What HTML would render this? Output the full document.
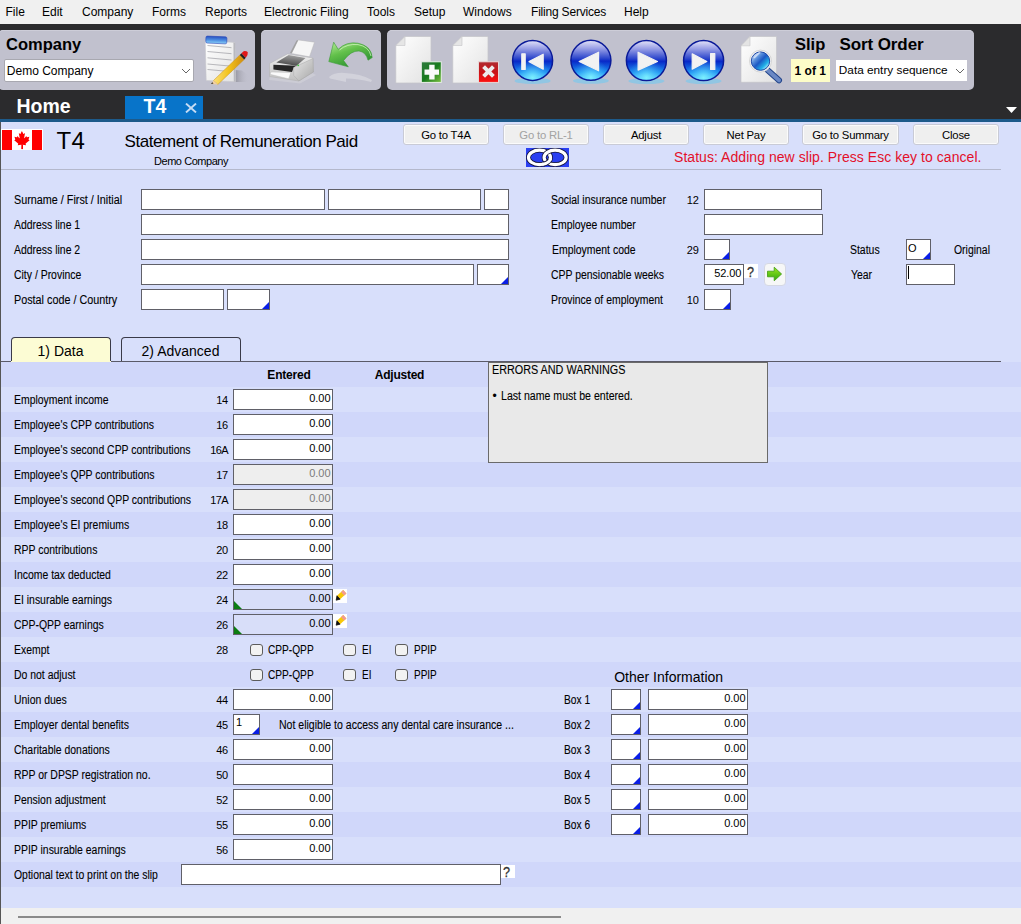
<!DOCTYPE html><html><head><meta charset="utf-8"><style>
html,body{margin:0;padding:0}
body{width:1021px;height:924px;overflow:hidden;position:relative;font-family:"Liberation Sans",sans-serif;background:#d8dffb}
.t{position:absolute;white-space:nowrap}
</style></head><body>
<div style="position:absolute;left:0px;top:0px;width:1021px;height:24px;background:#f0f0f0"></div>
<div class="t" style="left:5.5px;top:5.84px;font-size:12px;line-height:12px;font-weight:400;color:#000;">File</div>
<div class="t" style="left:42px;top:5.84px;font-size:12px;line-height:12px;font-weight:400;color:#000;">Edit</div>
<div class="t" style="left:82px;top:5.84px;font-size:12px;line-height:12px;font-weight:400;color:#000;">Company</div>
<div class="t" style="left:152px;top:5.84px;font-size:12px;line-height:12px;font-weight:400;color:#000;">Forms</div>
<div class="t" style="left:205px;top:5.84px;font-size:12px;line-height:12px;font-weight:400;color:#000;">Reports</div>
<div class="t" style="left:264px;top:5.84px;font-size:12px;line-height:12px;font-weight:400;color:#000;">Electronic Filing</div>
<div class="t" style="left:367px;top:5.84px;font-size:12px;line-height:12px;font-weight:400;color:#000;">Tools</div>
<div class="t" style="left:414px;top:5.84px;font-size:12px;line-height:12px;font-weight:400;color:#000;">Setup</div>
<div class="t" style="left:463px;top:5.84px;font-size:12px;line-height:12px;font-weight:400;color:#000;">Windows</div>
<div class="t" style="left:531px;top:5.84px;font-size:12px;line-height:12px;font-weight:400;color:#000;letter-spacing:-0.2px;">Filing Services</div>
<div class="t" style="left:624px;top:5.84px;font-size:12px;line-height:12px;font-weight:400;color:#000;">Help</div>
<div style="position:absolute;left:0px;top:24px;width:1021px;height:95px;background:#2b2b2d"></div>
<div style="position:absolute;left:-2px;top:30px;width:257px;height:60px;background:#c1c1ce;border-radius:5px;box-shadow:inset 0 1px 0 #cdcdd8"></div>
<div style="position:absolute;left:261px;top:30px;width:120px;height:60px;background:#c1c1ce;border-radius:5px;box-shadow:inset 0 1px 0 #cdcdd8"></div>
<div style="position:absolute;left:387px;top:30px;width:587px;height:60px;background:#c1c1ce;border-radius:5px;box-shadow:inset 0 1px 0 #cdcdd8"></div>
<div class="t" style="left:6px;top:36.33px;font-size:16.5px;line-height:16.5px;font-weight:700;color:#000;">Company</div>
<div style="position:absolute;left:4px;top:59px;width:190px;height:23px;background:#fff;border:1px solid #a8a8b0;box-sizing:border-box;border-radius:2px"></div>
<div class="t" style="left:6.8px;top:65.04px;font-size:12px;line-height:12px;font-weight:400;color:#000;">Demo Company</div>
<svg style="position:absolute;left:180.5px;top:68px" width="10" height="7"><path d="M1 1 L5 5 L9 1" fill="none" stroke="#555" stroke-width="0.9"/></svg>
<div class="t" style="left:795px;top:36.43px;font-size:16.5px;line-height:16.5px;font-weight:700;color:#000;">Slip</div>
<div class="t" style="left:839.5px;top:36.01px;font-size:17px;line-height:17px;font-weight:700;color:#000;letter-spacing:-0.1px;">Sort Order</div>
<div style="position:absolute;left:791px;top:59px;width:39px;height:23px;background:#fdfdc8"></div>
<div class="t" style="left:794.6px;top:65.04px;font-size:12px;line-height:12px;font-weight:700;color:#000;">1 of 1</div>
<div style="position:absolute;left:836px;top:60px;width:131px;height:21px;background:#fff"></div>
<div class="t" style="left:838.8px;top:65.21px;font-size:11.8px;line-height:11.8px;font-weight:400;color:#000;">Data entry sequence</div>
<svg style="position:absolute;left:954.5px;top:68px" width="10" height="7"><path d="M1 1 L5 5 L9 1" fill="none" stroke="#555" stroke-width="0.9"/></svg>
<div class="t" style="left:16.5px;top:97.49px;font-size:19.5px;line-height:19.5px;font-weight:700;color:#fff;">Home</div>
<div style="position:absolute;left:125px;top:96px;width:78px;height:23px;background:#0874c9"></div>
<div class="t" style="left:143.5px;top:97.49px;font-size:19.5px;line-height:19.5px;font-weight:700;color:#fff;">T4</div>
<svg style="position:absolute;left:184.5px;top:102.5px" width="12" height="10"><path d="M1 0.6 L11 9.4 M11 0.6 L1 9.4" stroke="#c6dcf4" stroke-width="2"/></svg>
<svg style="position:absolute;left:1006px;top:107px" width="12" height="7"><path d="M0 0 L11 0 L5.5 6 Z" fill="#fff"/></svg>
<div style="position:absolute;left:0px;top:119px;width:1021px;height:3px;background:#1d5a8a"></div>
<div style="position:absolute;left:0px;top:122px;width:1021px;height:786px;background:#d8dffb"></div>
<div style="position:absolute;left:0px;top:122px;width:1px;height:786px;background:#555"></div>
<svg style="position:absolute;left:1px;top:129px" width="42" height="21" viewBox="0 0 42 21"><rect width="42" height="21" fill="#fff"/><rect x="1" y="1" width="10" height="20" fill="#f00"/><rect x="31" y="1" width="10" height="20" fill="#f00"/><path transform="translate(1.03 0.1) scale(0.00414 0.00449)" d="m4890 4430-45-863a95 95 0 0 1 111-98l859 151-116-320a65 65 0 0 1 20-73l941-762-212-99a65 65 0 0 1-34-79l186-572-542 115a65 65 0 0 1-73-38l-105-247-423 454a65 65 0 0 1-111-57l204-1052-327 189a65 65 0 0 1-91-27l-332-652-332 652a65 65 0 0 1-91 27l-327-189 204 1052a65 65 0 0 1-111 57l-423-454-105 247a65 65 0 0 1-73 38l-542-115 186 572a65 65 0 0 1-34 79l-212 99 941 762a65 65 0 0 1 20 73l-116 320 859-151a95 95 0 0 1 111 98l-45 863z" fill="#f00"/><rect x="20.5" y="15.5" width="1.5" height="4.6" fill="#f00"/></svg>
<div class="t" style="left:56.5px;top:128.68px;font-size:24px;line-height:24px;font-weight:400;color:#000;letter-spacing:0.3px;">T4</div>
<div class="t" style="left:124.5px;top:133.21px;font-size:17px;line-height:17px;font-weight:400;color:#000;letter-spacing:-0.45px;">Statement of Remuneration Paid</div>
<div class="t" style="left:154px;top:155.69px;font-size:11px;line-height:11px;font-weight:400;color:#000;letter-spacing:-0.45px;">Demo Company</div>
<div style="position:absolute;left:403px;top:124px;width:86px;height:21px;box-sizing:border-box;border:1px solid #c9cbd6;border-radius:3px;background:#efefef;box-shadow:inset 0 0 0 1px #fbfbfb"></div>
<div class="t" style="left:446.0px;top:129.93px;font-size:11.3px;line-height:11.3px;font-weight:400;color:#000;letter-spacing:-0.2px;transform:scaleX(1) translateX(-50%);transform-origin:0 0;">Go to T4A</div>
<div style="position:absolute;left:503px;top:124px;width:86px;height:21px;box-sizing:border-box;border:1px solid #c9cbd6;border-radius:3px;background:#efefef;box-shadow:inset 0 0 0 1px #fbfbfb"></div>
<div class="t" style="left:546.0px;top:129.93px;font-size:11.3px;line-height:11.3px;font-weight:400;color:#a2a2a2;letter-spacing:-0.2px;transform:scaleX(1) translateX(-50%);transform-origin:0 0;">Go to RL-1</div>
<div style="position:absolute;left:603px;top:124px;width:86px;height:21px;box-sizing:border-box;border:1px solid #c9cbd6;border-radius:3px;background:#efefef;box-shadow:inset 0 0 0 1px #fbfbfb"></div>
<div class="t" style="left:646.0px;top:129.93px;font-size:11.3px;line-height:11.3px;font-weight:400;color:#000;letter-spacing:-0.2px;transform:scaleX(1) translateX(-50%);transform-origin:0 0;">Adjust</div>
<div style="position:absolute;left:703px;top:124px;width:86px;height:21px;box-sizing:border-box;border:1px solid #c9cbd6;border-radius:3px;background:#efefef;box-shadow:inset 0 0 0 1px #fbfbfb"></div>
<div class="t" style="left:746.0px;top:129.93px;font-size:11.3px;line-height:11.3px;font-weight:400;color:#000;letter-spacing:-0.2px;transform:scaleX(1) translateX(-50%);transform-origin:0 0;">Net Pay</div>
<div style="position:absolute;left:802px;top:124px;width:97px;height:21px;box-sizing:border-box;border:1px solid #c9cbd6;border-radius:3px;background:#efefef;box-shadow:inset 0 0 0 1px #fbfbfb"></div>
<div class="t" style="left:850.5px;top:129.93px;font-size:11.3px;line-height:11.3px;font-weight:400;color:#000;letter-spacing:-0.2px;transform:scaleX(1) translateX(-50%);transform-origin:0 0;">Go to Summary</div>
<div style="position:absolute;left:913px;top:124px;width:86px;height:21px;box-sizing:border-box;border:1px solid #c9cbd6;border-radius:3px;background:#efefef;box-shadow:inset 0 0 0 1px #fbfbfb"></div>
<div class="t" style="left:956.0px;top:129.93px;font-size:11.3px;line-height:11.3px;font-weight:400;color:#000;letter-spacing:-0.2px;transform:scaleX(1) translateX(-50%);transform-origin:0 0;">Close</div>
<svg style="position:absolute;left:526px;top:148px" width="43" height="19" viewBox="0 0 43 19"><rect width="43" height="19" fill="#2b40f2"/><ellipse cx="13.5" cy="9.4" rx="11" ry="7.2" fill="none" stroke="#14143a" stroke-width="4.8"/><ellipse cx="13.5" cy="9.4" rx="11" ry="7.2" fill="none" stroke="#fff" stroke-width="3.2"/><ellipse cx="29.1" cy="9.4" rx="11" ry="7.2" fill="none" stroke="#14143a" stroke-width="4.8"/><ellipse cx="29.1" cy="9.4" rx="11" ry="7.2" fill="none" stroke="#fff" stroke-width="3.2"/><path d="M23.84 11.86 A11 7.2 0 0 1 17.26 16.17" fill="none" stroke="#14143a" stroke-width="4.8"/><path d="M24.6 10.5 A11 7.2 0 0 1 16.2 16.45" fill="none" stroke="#fff" stroke-width="3.2"/></svg>
<div class="t" style="left:674px;top:150.15px;font-size:14px;line-height:14px;font-weight:400;color:#e3102a;letter-spacing:0.05px;">Status: Adding new slip. Press Esc key to cancel.</div>
<div style="position:absolute;left:1px;top:169px;width:1000px;height:1px;background:#b4b8cc"></div>
<div class="t" style="left:14.3px;top:193.84px;font-size:12px;line-height:12px;font-weight:400;color:#000;transform:scaleX(0.9);transform-origin:0 0;-webkit-text-stroke:0.1px #000;">Surname / First / Initial</div>
<div class="t" style="left:14.3px;top:218.84px;font-size:12px;line-height:12px;font-weight:400;color:#000;transform:scaleX(0.87);transform-origin:0 0;-webkit-text-stroke:0.1px #000;">Address line 1</div>
<div class="t" style="left:14.3px;top:243.84px;font-size:12px;line-height:12px;font-weight:400;color:#000;transform:scaleX(0.87);transform-origin:0 0;-webkit-text-stroke:0.1px #000;">Address line 2</div>
<div class="t" style="left:13.5px;top:268.84px;font-size:12px;line-height:12px;font-weight:400;color:#000;transform:scaleX(0.87);transform-origin:0 0;-webkit-text-stroke:0.1px #000;">City / Province</div>
<div class="t" style="left:14.3px;top:293.84px;font-size:12px;line-height:12px;font-weight:400;color:#000;transform:scaleX(0.9);transform-origin:0 0;-webkit-text-stroke:0.1px #000;">Postal code / Country</div>
<div style="position:absolute;left:141px;top:189px;width:184px;height:21px;box-sizing:border-box;border:1px solid #606068;background:#fff"></div>
<div style="position:absolute;left:328px;top:189px;width:153px;height:21px;box-sizing:border-box;border:1px solid #606068;background:#fff"></div>
<div style="position:absolute;left:484px;top:189px;width:25px;height:21px;box-sizing:border-box;border:1px solid #606068;background:#fff"></div>
<div style="position:absolute;left:141px;top:214px;width:368px;height:21px;box-sizing:border-box;border:1px solid #606068;background:#fff"></div>
<div style="position:absolute;left:141px;top:239px;width:368px;height:21px;box-sizing:border-box;border:1px solid #606068;background:#fff"></div>
<div style="position:absolute;left:141px;top:264px;width:333px;height:21px;box-sizing:border-box;border:1px solid #606068;background:#fff"></div>
<div style="position:absolute;left:477px;top:264px;width:32px;height:21px;box-sizing:border-box;border:1px solid #606068;background:#fff"></div>
<svg style="position:absolute;left:501px;top:277px" width="7" height="7"><path d="M7 0 L7 7 L0 7 Z" fill="#0a1ee6"/></svg>
<div style="position:absolute;left:141px;top:289px;width:83px;height:21px;box-sizing:border-box;border:1px solid #606068;background:#fff"></div>
<div style="position:absolute;left:227px;top:289px;width:43px;height:21px;box-sizing:border-box;border:1px solid #606068;background:#fff"></div>
<svg style="position:absolute;left:262px;top:302px" width="7" height="7"><path d="M7 0 L7 7 L0 7 Z" fill="#0a1ee6"/></svg>
<div class="t" style="left:551px;top:193.84px;font-size:12px;line-height:12px;font-weight:400;color:#000;transform:scaleX(0.87);transform-origin:0 0;-webkit-text-stroke:0.1px #000;">Social insurance number</div>
<div class="t" style="right:322.5px;top:194.69px;font-size:11px;line-height:11px;font-weight:400;color:#000;letter-spacing:-0.3px;">12</div>
<div class="t" style="left:551px;top:218.84px;font-size:12px;line-height:12px;font-weight:400;color:#000;transform:scaleX(0.87);transform-origin:0 0;-webkit-text-stroke:0.1px #000;">Employee number</div>
<div class="t" style="left:552px;top:243.84px;font-size:12px;line-height:12px;font-weight:400;color:#000;transform:scaleX(0.87);transform-origin:0 0;-webkit-text-stroke:0.1px #000;">Employment code</div>
<div class="t" style="right:322.5px;top:244.69px;font-size:11px;line-height:11px;font-weight:400;color:#000;letter-spacing:-0.3px;">29</div>
<div class="t" style="left:551px;top:268.84px;font-size:12px;line-height:12px;font-weight:400;color:#000;transform:scaleX(0.87);transform-origin:0 0;-webkit-text-stroke:0.1px #000;">CPP pensionable weeks</div>
<div class="t" style="left:551px;top:293.84px;font-size:12px;line-height:12px;font-weight:400;color:#000;transform:scaleX(0.87);transform-origin:0 0;-webkit-text-stroke:0.1px #000;">Province of employment</div>
<div class="t" style="right:322.5px;top:294.69px;font-size:11px;line-height:11px;font-weight:400;color:#000;letter-spacing:-0.3px;">10</div>
<div style="position:absolute;left:704px;top:189px;width:118px;height:21px;box-sizing:border-box;border:1px solid #606068;background:#fff"></div>
<div style="position:absolute;left:704px;top:214px;width:119px;height:21px;box-sizing:border-box;border:1px solid #606068;background:#fff"></div>
<div style="position:absolute;left:704px;top:239px;width:26px;height:21px;box-sizing:border-box;border:1px solid #606068;background:#fff"></div>
<svg style="position:absolute;left:722px;top:252px" width="7" height="7"><path d="M7 0 L7 7 L0 7 Z" fill="#0a1ee6"/></svg>
<div style="position:absolute;left:704px;top:264px;width:40px;height:21px;box-sizing:border-box;border:1px solid #606068;background:#fff"></div>
<div class="t" style="right:279.70000000000005px;top:268.19px;font-size:11px;line-height:11px;font-weight:400;color:#000;letter-spacing:-0.1px;">52.00</div>
<div style="position:absolute;left:744px;top:264px;width:14px;height:14px;background:#fff"></div>
<div class="t" style="left:747px;top:264.95px;font-size:14px;line-height:14px;font-weight:400;color:#333;transform:scaleX(0.9);transform-origin:0 0;-webkit-text-stroke:0.3px #333;">?</div>
<div style="position:absolute;left:763.5px;top:263px;width:22px;height:23px;box-sizing:border-box;border:1px solid #d5d8e4;border-radius:4px;background:#f6f7f7"></div>
<svg style="position:absolute;left:766px;top:266px" width="17" height="16" viewBox="0 0 17 16"><defs><linearGradient id="ga" x1="0" y1="0" x2="0" y2="1"><stop offset="0" stop-color="#9be81e"/><stop offset="1" stop-color="#2fa80e"/></linearGradient></defs><path d="M1.5 5.2 L8.2 5.2 L8.2 1.2 L15.6 8 L8.2 14.8 L8.2 10.8 L1.5 10.8 Z" fill="url(#ga)" stroke="#3d9a10" stroke-width="0.8"/></svg>
<div style="position:absolute;left:704px;top:289px;width:27px;height:21px;box-sizing:border-box;border:1px solid #606068;background:#fff"></div>
<svg style="position:absolute;left:723px;top:302px" width="7" height="7"><path d="M7 0 L7 7 L0 7 Z" fill="#0a1ee6"/></svg>
<div class="t" style="left:850.2px;top:243.84px;font-size:12px;line-height:12px;font-weight:400;color:#000;transform:scaleX(0.87);transform-origin:0 0;-webkit-text-stroke:0.1px #000;">Status</div>
<div class="t" style="left:851px;top:268.84px;font-size:12px;line-height:12px;font-weight:400;color:#000;transform:scaleX(0.87);transform-origin:0 0;-webkit-text-stroke:0.1px #000;">Year</div>
<div class="t" style="left:953.6px;top:243.84px;font-size:12px;line-height:12px;font-weight:400;color:#000;transform:scaleX(0.87);transform-origin:0 0;-webkit-text-stroke:0.1px #000;">Original</div>
<div style="position:absolute;left:906px;top:239px;width:25px;height:21px;box-sizing:border-box;border:1px solid #606068;background:#fff"></div>
<svg style="position:absolute;left:923px;top:252px" width="7" height="7"><path d="M7 0 L7 7 L0 7 Z" fill="#0a1ee6"/></svg>
<div class="t" style="left:908px;top:242.69px;font-size:11px;line-height:11px;font-weight:400;color:#000;">O</div>
<div style="position:absolute;left:906px;top:264px;width:49px;height:21px;box-sizing:border-box;border:1px solid #606068;background:#fff"></div>
<div style="position:absolute;left:908px;top:266px;width:1px;height:13px;background:#000"></div>
<div style="position:absolute;left:1px;top:362px;width:1020px;height:25px;background:#d0d7fa"></div>
<div style="position:absolute;left:1px;top:387px;width:1020px;height:25px;background:#d8dffb"></div>
<div style="position:absolute;left:1px;top:412px;width:1020px;height:25px;background:#d0d7fa"></div>
<div style="position:absolute;left:1px;top:437px;width:1020px;height:25px;background:#d8dffb"></div>
<div style="position:absolute;left:1px;top:462px;width:1020px;height:25px;background:#d0d7fa"></div>
<div style="position:absolute;left:1px;top:487px;width:1020px;height:25px;background:#d8dffb"></div>
<div style="position:absolute;left:1px;top:512px;width:1020px;height:25px;background:#d0d7fa"></div>
<div style="position:absolute;left:1px;top:537px;width:1020px;height:25px;background:#d8dffb"></div>
<div style="position:absolute;left:1px;top:562px;width:1020px;height:25px;background:#d0d7fa"></div>
<div style="position:absolute;left:1px;top:587px;width:1020px;height:25px;background:#d8dffb"></div>
<div style="position:absolute;left:1px;top:612px;width:1020px;height:25px;background:#d0d7fa"></div>
<div style="position:absolute;left:1px;top:637px;width:1020px;height:25px;background:#d8dffb"></div>
<div style="position:absolute;left:1px;top:662px;width:1020px;height:25px;background:#d0d7fa"></div>
<div style="position:absolute;left:1px;top:687px;width:1020px;height:25px;background:#d8dffb"></div>
<div style="position:absolute;left:1px;top:712px;width:1020px;height:25px;background:#d0d7fa"></div>
<div style="position:absolute;left:1px;top:737px;width:1020px;height:25px;background:#d8dffb"></div>
<div style="position:absolute;left:1px;top:762px;width:1020px;height:25px;background:#d0d7fa"></div>
<div style="position:absolute;left:1px;top:787px;width:1020px;height:25px;background:#d8dffb"></div>
<div style="position:absolute;left:1px;top:812px;width:1020px;height:25px;background:#d0d7fa"></div>
<div style="position:absolute;left:1px;top:837px;width:1020px;height:25px;background:#d8dffb"></div>
<div style="position:absolute;left:1px;top:862px;width:1020px;height:25px;background:#d0d7fa"></div>
<div style="position:absolute;left:1px;top:887px;width:1020px;height:21px;background:#d8dffb"></div>
<div style="position:absolute;left:0px;top:908px;width:1021px;height:16px;background:#f0f0f0"></div>
<div style="position:absolute;left:18px;top:916px;width:543px;height:2px;background:#8a8a8a"></div>
<div style="position:absolute;left:0px;top:122px;width:1px;height:802px;background:#555"></div>
<div style="position:absolute;left:11px;top:337px;width:100px;height:25px;box-sizing:border-box;border:1px solid #3a3a48;border-bottom:none;border-radius:4px 4px 0 0;background:#fcfcd4"></div>
<div class="t" style="left:60.5px;top:343.65px;font-size:14px;line-height:14px;font-weight:400;color:#000;transform:scaleX(1) translateX(-50%);transform-origin:0 0;">1) Data</div>
<div style="position:absolute;left:121px;top:337px;width:120px;height:24px;box-sizing:border-box;border:1px solid #3a3a48;border-bottom:none;border-radius:4px 4px 0 0;background:#d8dffb"></div>
<div class="t" style="left:180.5px;top:343.65px;font-size:14px;line-height:14px;font-weight:400;color:#000;transform:scaleX(1) translateX(-50%);transform-origin:0 0;">2) Advanced</div>
<div style="position:absolute;left:1px;top:361px;width:1000px;height:1px;background:#5a5a68"></div>
<div style="position:absolute;left:11px;top:361px;width:100px;height:1px;background:#fcfcd2"></div>
<div class="t" style="left:289px;top:368.64px;font-size:12px;line-height:12px;font-weight:700;color:#000;letter-spacing:-0.2px;transform:scaleX(1) translateX(-50%);transform-origin:0 0;">Entered</div>
<div class="t" style="left:399.5px;top:368.64px;font-size:12px;line-height:12px;font-weight:700;color:#000;letter-spacing:-0.25px;transform:scaleX(1) translateX(-50%);transform-origin:0 0;">Adjusted</div>
<div class="t" style="left:14.2px;top:393.84px;font-size:12px;line-height:12px;font-weight:400;color:#000;transform:scaleX(0.87);transform-origin:0 0;-webkit-text-stroke:0.1px #000;">Employment income</div>
<div class="t" style="right:793px;top:394.69px;font-size:11px;line-height:11px;font-weight:400;color:#000;letter-spacing:-0.2px;">14</div>
<div style="position:absolute;left:233px;top:389px;width:100px;height:21px;box-sizing:border-box;border:1px solid #606068;background:#fff"></div>
<div class="t" style="right:690.5px;top:393.19px;font-size:11px;line-height:11px;font-weight:400;color:#000;letter-spacing:-0.05px;">0.00</div>
<div class="t" style="left:14.2px;top:418.84px;font-size:12px;line-height:12px;font-weight:400;color:#000;transform:scaleX(0.87);transform-origin:0 0;-webkit-text-stroke:0.1px #000;">Employee's CPP contributions</div>
<div class="t" style="right:793px;top:419.69px;font-size:11px;line-height:11px;font-weight:400;color:#000;letter-spacing:-0.2px;">16</div>
<div style="position:absolute;left:233px;top:414px;width:100px;height:21px;box-sizing:border-box;border:1px solid #606068;background:#fff"></div>
<div class="t" style="right:690.5px;top:418.19px;font-size:11px;line-height:11px;font-weight:400;color:#000;letter-spacing:-0.05px;">0.00</div>
<div class="t" style="left:14.2px;top:443.84px;font-size:12px;line-height:12px;font-weight:400;color:#000;transform:scaleX(0.87);transform-origin:0 0;-webkit-text-stroke:0.1px #000;">Employee's second CPP contributions</div>
<div class="t" style="right:793px;top:444.69px;font-size:11px;line-height:11px;font-weight:400;color:#000;letter-spacing:-0.6px;">16A</div>
<div style="position:absolute;left:233px;top:439px;width:100px;height:21px;box-sizing:border-box;border:1px solid #606068;background:#fff"></div>
<div class="t" style="right:690.5px;top:443.19px;font-size:11px;line-height:11px;font-weight:400;color:#000;letter-spacing:-0.05px;">0.00</div>
<div class="t" style="left:14.2px;top:468.84px;font-size:12px;line-height:12px;font-weight:400;color:#000;transform:scaleX(0.87);transform-origin:0 0;-webkit-text-stroke:0.1px #000;">Employee's QPP contributions</div>
<div class="t" style="right:793px;top:469.69px;font-size:11px;line-height:11px;font-weight:400;color:#000;letter-spacing:-0.2px;">17</div>
<div style="position:absolute;left:233px;top:464px;width:100px;height:21px;box-sizing:border-box;border:1px solid #606068;background:#eeeeee"></div>
<div class="t" style="right:690.5px;top:468.19px;font-size:11px;line-height:11px;font-weight:400;color:#7b7b7b;letter-spacing:-0.05px;">0.00</div>
<div class="t" style="left:14.2px;top:493.84px;font-size:12px;line-height:12px;font-weight:400;color:#000;transform:scaleX(0.87);transform-origin:0 0;-webkit-text-stroke:0.1px #000;">Employee's second QPP contributions</div>
<div class="t" style="right:793px;top:494.69px;font-size:11px;line-height:11px;font-weight:400;color:#000;letter-spacing:-0.6px;">17A</div>
<div style="position:absolute;left:233px;top:489px;width:100px;height:21px;box-sizing:border-box;border:1px solid #606068;background:#eeeeee"></div>
<div class="t" style="right:690.5px;top:493.19px;font-size:11px;line-height:11px;font-weight:400;color:#7b7b7b;letter-spacing:-0.05px;">0.00</div>
<div class="t" style="left:14.2px;top:518.84px;font-size:12px;line-height:12px;font-weight:400;color:#000;transform:scaleX(0.87);transform-origin:0 0;-webkit-text-stroke:0.1px #000;">Employee's EI premiums</div>
<div class="t" style="right:793px;top:519.69px;font-size:11px;line-height:11px;font-weight:400;color:#000;letter-spacing:-0.2px;">18</div>
<div style="position:absolute;left:233px;top:514px;width:100px;height:21px;box-sizing:border-box;border:1px solid #606068;background:#fff"></div>
<div class="t" style="right:690.5px;top:518.19px;font-size:11px;line-height:11px;font-weight:400;color:#000;letter-spacing:-0.05px;">0.00</div>
<div class="t" style="left:14.2px;top:543.84px;font-size:12px;line-height:12px;font-weight:400;color:#000;transform:scaleX(0.87);transform-origin:0 0;-webkit-text-stroke:0.1px #000;">RPP contributions</div>
<div class="t" style="right:793px;top:544.69px;font-size:11px;line-height:11px;font-weight:400;color:#000;letter-spacing:-0.2px;">20</div>
<div style="position:absolute;left:233px;top:539px;width:100px;height:21px;box-sizing:border-box;border:1px solid #606068;background:#fff"></div>
<div class="t" style="right:690.5px;top:543.19px;font-size:11px;line-height:11px;font-weight:400;color:#000;letter-spacing:-0.05px;">0.00</div>
<div class="t" style="left:14.2px;top:568.84px;font-size:12px;line-height:12px;font-weight:400;color:#000;transform:scaleX(0.87);transform-origin:0 0;-webkit-text-stroke:0.1px #000;">Income tax deducted</div>
<div class="t" style="right:793px;top:569.69px;font-size:11px;line-height:11px;font-weight:400;color:#000;letter-spacing:-0.2px;">22</div>
<div style="position:absolute;left:233px;top:564px;width:100px;height:21px;box-sizing:border-box;border:1px solid #606068;background:#fff"></div>
<div class="t" style="right:690.5px;top:568.19px;font-size:11px;line-height:11px;font-weight:400;color:#000;letter-spacing:-0.05px;">0.00</div>
<div class="t" style="left:14.2px;top:593.84px;font-size:12px;line-height:12px;font-weight:400;color:#000;transform:scaleX(0.87);transform-origin:0 0;-webkit-text-stroke:0.1px #000;">EI insurable earnings</div>
<div class="t" style="right:793px;top:594.69px;font-size:11px;line-height:11px;font-weight:400;color:#000;letter-spacing:-0.2px;">24</div>
<div style="position:absolute;left:233px;top:589px;width:100px;height:21px;box-sizing:border-box;border:1px solid #606068;background:#d8def9"></div>
<svg style="position:absolute;left:234px;top:601px" width="8" height="8"><path d="M0 0 L8 8 L0 8 Z" fill="#0b7d12"/></svg>
<div class="t" style="right:690.5px;top:593.19px;font-size:11px;line-height:11px;font-weight:400;color:#000;letter-spacing:-0.05px;">0.00</div>
<svg style="position:absolute;left:333px;top:589px" width="14" height="14" viewBox="0 0 14 14"><rect width="14" height="14" fill="#fff"/><path d="M3.94 6.81 L10.24 1.01 L13.36 4.39 L7.06 10.19 Z" fill="#f8c808"/><path d="M8.04 3.01 L10.24 1.01 L13.36 4.39 L11.16 6.39 Z" fill="#f29a94"/><path d="M3.94 6.81 L7.06 10.19 L3.2 11.2 Z" fill="#111" stroke="#111" stroke-width="0.8"/></svg>
<div class="t" style="left:14.2px;top:618.84px;font-size:12px;line-height:12px;font-weight:400;color:#000;transform:scaleX(0.87);transform-origin:0 0;-webkit-text-stroke:0.1px #000;">CPP-QPP earnings</div>
<div class="t" style="right:793px;top:619.69px;font-size:11px;line-height:11px;font-weight:400;color:#000;letter-spacing:-0.2px;">26</div>
<div style="position:absolute;left:233px;top:614px;width:100px;height:21px;box-sizing:border-box;border:1px solid #606068;background:#d8def9"></div>
<svg style="position:absolute;left:234px;top:626px" width="8" height="8"><path d="M0 0 L8 8 L0 8 Z" fill="#0b7d12"/></svg>
<div class="t" style="right:690.5px;top:618.19px;font-size:11px;line-height:11px;font-weight:400;color:#000;letter-spacing:-0.05px;">0.00</div>
<svg style="position:absolute;left:333px;top:614px" width="14" height="14" viewBox="0 0 14 14"><rect width="14" height="14" fill="#fff"/><path d="M3.94 6.81 L10.24 1.01 L13.36 4.39 L7.06 10.19 Z" fill="#f8c808"/><path d="M8.04 3.01 L10.24 1.01 L13.36 4.39 L11.16 6.39 Z" fill="#f29a94"/><path d="M3.94 6.81 L7.06 10.19 L3.2 11.2 Z" fill="#111" stroke="#111" stroke-width="0.8"/></svg>
<div class="t" style="left:14.2px;top:643.84px;font-size:12px;line-height:12px;font-weight:400;color:#000;transform:scaleX(0.87);transform-origin:0 0;-webkit-text-stroke:0.1px #000;">Exempt</div>
<div class="t" style="right:793px;top:644.69px;font-size:11px;line-height:11px;font-weight:400;color:#000;letter-spacing:-0.2px;">28</div>
<div style="position:absolute;left:250px;top:644px;width:13px;height:12px;box-sizing:border-box;border:1px solid #5c5c5c;border-radius:3px;background:#f2f2f2"></div>
<div class="t" style="left:268.4px;top:643.84px;font-size:12px;line-height:12px;font-weight:400;color:#000;transform:scaleX(0.845);transform-origin:0 0;-webkit-text-stroke:0.1px #000;">CPP-QPP</div>
<div style="position:absolute;left:343px;top:644px;width:13px;height:12px;box-sizing:border-box;border:1px solid #5c5c5c;border-radius:3px;background:#f2f2f2"></div>
<div class="t" style="left:362.4px;top:643.84px;font-size:12px;line-height:12px;font-weight:400;color:#000;transform:scaleX(0.83);transform-origin:0 0;-webkit-text-stroke:0.1px #000;">EI</div>
<div style="position:absolute;left:395px;top:644px;width:13px;height:12px;box-sizing:border-box;border:1px solid #5c5c5c;border-radius:3px;background:#f2f2f2"></div>
<div class="t" style="left:414.4px;top:643.84px;font-size:12px;line-height:12px;font-weight:400;color:#000;transform:scaleX(0.83);transform-origin:0 0;-webkit-text-stroke:0.1px #000;">PPIP</div>
<div class="t" style="left:14.2px;top:668.84px;font-size:12px;line-height:12px;font-weight:400;color:#000;transform:scaleX(0.87);transform-origin:0 0;-webkit-text-stroke:0.1px #000;">Do not adjust</div>
<div style="position:absolute;left:250px;top:669px;width:13px;height:12px;box-sizing:border-box;border:1px solid #5c5c5c;border-radius:3px;background:#f2f2f2"></div>
<div class="t" style="left:268.4px;top:668.84px;font-size:12px;line-height:12px;font-weight:400;color:#000;transform:scaleX(0.845);transform-origin:0 0;-webkit-text-stroke:0.1px #000;">CPP-QPP</div>
<div style="position:absolute;left:343px;top:669px;width:13px;height:12px;box-sizing:border-box;border:1px solid #5c5c5c;border-radius:3px;background:#f2f2f2"></div>
<div class="t" style="left:362.4px;top:668.84px;font-size:12px;line-height:12px;font-weight:400;color:#000;transform:scaleX(0.83);transform-origin:0 0;-webkit-text-stroke:0.1px #000;">EI</div>
<div style="position:absolute;left:395px;top:669px;width:13px;height:12px;box-sizing:border-box;border:1px solid #5c5c5c;border-radius:3px;background:#f2f2f2"></div>
<div class="t" style="left:414.4px;top:668.84px;font-size:12px;line-height:12px;font-weight:400;color:#000;transform:scaleX(0.83);transform-origin:0 0;-webkit-text-stroke:0.1px #000;">PPIP</div>
<div class="t" style="left:14.2px;top:693.84px;font-size:12px;line-height:12px;font-weight:400;color:#000;transform:scaleX(0.87);transform-origin:0 0;-webkit-text-stroke:0.1px #000;">Union dues</div>
<div class="t" style="right:793px;top:694.69px;font-size:11px;line-height:11px;font-weight:400;color:#000;letter-spacing:-0.2px;">44</div>
<div style="position:absolute;left:233px;top:689px;width:100px;height:21px;box-sizing:border-box;border:1px solid #606068;background:#fff"></div>
<div class="t" style="right:690.5px;top:693.19px;font-size:11px;line-height:11px;font-weight:400;color:#000;letter-spacing:-0.05px;">0.00</div>
<div class="t" style="left:14.2px;top:718.84px;font-size:12px;line-height:12px;font-weight:400;color:#000;transform:scaleX(0.87);transform-origin:0 0;-webkit-text-stroke:0.1px #000;">Employer dental benefits</div>
<div class="t" style="right:793px;top:719.69px;font-size:11px;line-height:11px;font-weight:400;color:#000;letter-spacing:-0.2px;">45</div>
<div style="position:absolute;left:233px;top:714px;width:27px;height:21px;box-sizing:border-box;border:1px solid #606068;background:#fff"></div>
<svg style="position:absolute;left:252px;top:727px" width="7" height="7"><path d="M7 0 L7 7 L0 7 Z" fill="#0a1ee6"/></svg>
<div class="t" style="left:236px;top:717.19px;font-size:11px;line-height:11px;font-weight:400;color:#000;">1</div>
<div class="t" style="left:279.4px;top:718.84px;font-size:12px;line-height:12px;font-weight:400;color:#000;transform:scaleX(0.878);transform-origin:0 0;-webkit-text-stroke:0.1px #000;">Not eligible to access any dental care insurance ...</div>
<div class="t" style="left:14.2px;top:743.84px;font-size:12px;line-height:12px;font-weight:400;color:#000;transform:scaleX(0.87);transform-origin:0 0;-webkit-text-stroke:0.1px #000;">Charitable donations</div>
<div class="t" style="right:793px;top:744.69px;font-size:11px;line-height:11px;font-weight:400;color:#000;letter-spacing:-0.2px;">46</div>
<div style="position:absolute;left:233px;top:739px;width:100px;height:21px;box-sizing:border-box;border:1px solid #606068;background:#fff"></div>
<div class="t" style="right:690.5px;top:743.19px;font-size:11px;line-height:11px;font-weight:400;color:#000;letter-spacing:-0.05px;">0.00</div>
<div class="t" style="left:14.2px;top:768.84px;font-size:12px;line-height:12px;font-weight:400;color:#000;transform:scaleX(0.87);transform-origin:0 0;-webkit-text-stroke:0.1px #000;">RPP or DPSP registration no.</div>
<div class="t" style="right:793px;top:769.69px;font-size:11px;line-height:11px;font-weight:400;color:#000;letter-spacing:-0.2px;">50</div>
<div style="position:absolute;left:233px;top:764px;width:100px;height:21px;box-sizing:border-box;border:1px solid #606068;background:#fff"></div>
<div class="t" style="left:14.2px;top:793.84px;font-size:12px;line-height:12px;font-weight:400;color:#000;transform:scaleX(0.87);transform-origin:0 0;-webkit-text-stroke:0.1px #000;">Pension adjustment</div>
<div class="t" style="right:793px;top:794.69px;font-size:11px;line-height:11px;font-weight:400;color:#000;letter-spacing:-0.2px;">52</div>
<div style="position:absolute;left:233px;top:789px;width:100px;height:21px;box-sizing:border-box;border:1px solid #606068;background:#fff"></div>
<div class="t" style="right:690.5px;top:793.19px;font-size:11px;line-height:11px;font-weight:400;color:#000;letter-spacing:-0.05px;">0.00</div>
<div class="t" style="left:14.2px;top:818.84px;font-size:12px;line-height:12px;font-weight:400;color:#000;transform:scaleX(0.87);transform-origin:0 0;-webkit-text-stroke:0.1px #000;">PPIP premiums</div>
<div class="t" style="right:793px;top:819.69px;font-size:11px;line-height:11px;font-weight:400;color:#000;letter-spacing:-0.2px;">55</div>
<div style="position:absolute;left:233px;top:814px;width:100px;height:21px;box-sizing:border-box;border:1px solid #606068;background:#fff"></div>
<div class="t" style="right:690.5px;top:818.19px;font-size:11px;line-height:11px;font-weight:400;color:#000;letter-spacing:-0.05px;">0.00</div>
<div class="t" style="left:14.2px;top:843.84px;font-size:12px;line-height:12px;font-weight:400;color:#000;transform:scaleX(0.87);transform-origin:0 0;-webkit-text-stroke:0.1px #000;">PPIP insurable earnings</div>
<div class="t" style="right:793px;top:844.69px;font-size:11px;line-height:11px;font-weight:400;color:#000;letter-spacing:-0.2px;">56</div>
<div style="position:absolute;left:233px;top:839px;width:100px;height:21px;box-sizing:border-box;border:1px solid #606068;background:#fff"></div>
<div class="t" style="right:690.5px;top:843.19px;font-size:11px;line-height:11px;font-weight:400;color:#000;letter-spacing:-0.05px;">0.00</div>
<div class="t" style="left:13.7px;top:869.14px;font-size:12px;line-height:12px;font-weight:400;color:#000;transform:scaleX(0.87);transform-origin:0 0;-webkit-text-stroke:0.1px #000;">Optional text to print on the slip</div>
<div style="position:absolute;left:181px;top:864px;width:320px;height:21px;box-sizing:border-box;border:1px solid #606068;background:#fff"></div>
<div style="position:absolute;left:501px;top:865px;width:14px;height:13px;background:#fff"></div>
<div class="t" style="left:503px;top:865.35px;font-size:14px;line-height:14px;font-weight:400;color:#333;transform:scaleX(0.9);transform-origin:0 0;-webkit-text-stroke:0.3px #333;">?</div>
<div style="position:absolute;left:488px;top:362px;width:280px;height:101px;box-sizing:border-box;border:1px solid #6a6a6a;background:#e9e9e9"></div>
<div class="t" style="left:492.3px;top:364.14px;font-size:12px;line-height:12px;font-weight:400;color:#000;transform:scaleX(0.9);transform-origin:0 0;-webkit-text-stroke:0.1px #000;">ERRORS AND WARNINGS</div>
<div class="t" style="left:492.5px;top:390.14px;font-size:12px;line-height:12px;font-weight:400;color:#000;transform:scaleX(1);transform-origin:0 0;-webkit-text-stroke:0.1px #000;">&#8226;</div>
<div class="t" style="left:501.2px;top:390.14px;font-size:12px;line-height:12px;font-weight:400;color:#000;transform:scaleX(0.882);transform-origin:0 0;-webkit-text-stroke:0.1px #000;">Last name must be entered.</div>
<div class="t" style="left:614.2px;top:670.15px;font-size:14px;line-height:14px;font-weight:400;color:#000;">Other Information</div>
<div class="t" style="left:564px;top:694.14px;font-size:12px;line-height:12px;font-weight:400;color:#000;transform:scaleX(0.85);transform-origin:0 0;-webkit-text-stroke:0.1px #000;">Box 1</div>
<div style="position:absolute;left:611px;top:689px;width:30px;height:21px;box-sizing:border-box;border:1px solid #606068;background:#fff"></div>
<svg style="position:absolute;left:633px;top:702px" width="7" height="7"><path d="M7 0 L7 7 L0 7 Z" fill="#0a1ee6"/></svg>
<div style="position:absolute;left:648px;top:689px;width:100px;height:21px;box-sizing:border-box;border:1px solid #606068;background:#fff"></div>
<div class="t" style="right:275.5px;top:693.19px;font-size:11px;line-height:11px;font-weight:400;color:#000;letter-spacing:-0.05px;">0.00</div>
<div class="t" style="left:564px;top:719.14px;font-size:12px;line-height:12px;font-weight:400;color:#000;transform:scaleX(0.85);transform-origin:0 0;-webkit-text-stroke:0.1px #000;">Box 2</div>
<div style="position:absolute;left:611px;top:714px;width:30px;height:21px;box-sizing:border-box;border:1px solid #606068;background:#fff"></div>
<svg style="position:absolute;left:633px;top:727px" width="7" height="7"><path d="M7 0 L7 7 L0 7 Z" fill="#0a1ee6"/></svg>
<div style="position:absolute;left:648px;top:714px;width:100px;height:21px;box-sizing:border-box;border:1px solid #606068;background:#fff"></div>
<div class="t" style="right:275.5px;top:718.19px;font-size:11px;line-height:11px;font-weight:400;color:#000;letter-spacing:-0.05px;">0.00</div>
<div class="t" style="left:564px;top:744.14px;font-size:12px;line-height:12px;font-weight:400;color:#000;transform:scaleX(0.85);transform-origin:0 0;-webkit-text-stroke:0.1px #000;">Box 3</div>
<div style="position:absolute;left:611px;top:739px;width:30px;height:21px;box-sizing:border-box;border:1px solid #606068;background:#fff"></div>
<svg style="position:absolute;left:633px;top:752px" width="7" height="7"><path d="M7 0 L7 7 L0 7 Z" fill="#0a1ee6"/></svg>
<div style="position:absolute;left:648px;top:739px;width:100px;height:21px;box-sizing:border-box;border:1px solid #606068;background:#fff"></div>
<div class="t" style="right:275.5px;top:743.19px;font-size:11px;line-height:11px;font-weight:400;color:#000;letter-spacing:-0.05px;">0.00</div>
<div class="t" style="left:564px;top:769.14px;font-size:12px;line-height:12px;font-weight:400;color:#000;transform:scaleX(0.85);transform-origin:0 0;-webkit-text-stroke:0.1px #000;">Box 4</div>
<div style="position:absolute;left:611px;top:764px;width:30px;height:21px;box-sizing:border-box;border:1px solid #606068;background:#fff"></div>
<svg style="position:absolute;left:633px;top:777px" width="7" height="7"><path d="M7 0 L7 7 L0 7 Z" fill="#0a1ee6"/></svg>
<div style="position:absolute;left:648px;top:764px;width:100px;height:21px;box-sizing:border-box;border:1px solid #606068;background:#fff"></div>
<div class="t" style="right:275.5px;top:768.19px;font-size:11px;line-height:11px;font-weight:400;color:#000;letter-spacing:-0.05px;">0.00</div>
<div class="t" style="left:564px;top:794.14px;font-size:12px;line-height:12px;font-weight:400;color:#000;transform:scaleX(0.85);transform-origin:0 0;-webkit-text-stroke:0.1px #000;">Box 5</div>
<div style="position:absolute;left:611px;top:789px;width:30px;height:21px;box-sizing:border-box;border:1px solid #606068;background:#fff"></div>
<svg style="position:absolute;left:633px;top:802px" width="7" height="7"><path d="M7 0 L7 7 L0 7 Z" fill="#0a1ee6"/></svg>
<div style="position:absolute;left:648px;top:789px;width:100px;height:21px;box-sizing:border-box;border:1px solid #606068;background:#fff"></div>
<div class="t" style="right:275.5px;top:793.19px;font-size:11px;line-height:11px;font-weight:400;color:#000;letter-spacing:-0.05px;">0.00</div>
<div class="t" style="left:564px;top:819.14px;font-size:12px;line-height:12px;font-weight:400;color:#000;transform:scaleX(0.85);transform-origin:0 0;-webkit-text-stroke:0.1px #000;">Box 6</div>
<div style="position:absolute;left:611px;top:814px;width:30px;height:21px;box-sizing:border-box;border:1px solid #606068;background:#fff"></div>
<svg style="position:absolute;left:633px;top:827px" width="7" height="7"><path d="M7 0 L7 7 L0 7 Z" fill="#0a1ee6"/></svg>
<div style="position:absolute;left:648px;top:814px;width:100px;height:21px;box-sizing:border-box;border:1px solid #606068;background:#fff"></div>
<div class="t" style="right:275.5px;top:818.19px;font-size:11px;line-height:11px;font-weight:400;color:#000;letter-spacing:-0.05px;">0.00</div>
<svg style="position:absolute;left:0;top:0" width="1021" height="119" viewBox="0 0 1021 119"><defs><linearGradient id="pg" x1="0" y1="0" x2="1" y2="1"><stop offset="0" stop-color="#ffffff"/><stop offset="1" stop-color="#e2e2e2"/></linearGradient><linearGradient id="pencil" x1="0" y1="0" x2="1" y2="0"><stop offset="0" stop-color="#fbe07a"/><stop offset="0.5" stop-color="#f2c21a"/><stop offset="1" stop-color="#d08c10"/></linearGradient><linearGradient id="blueh" x1="0" y1="0" x2="0" y2="1"><stop offset="0" stop-color="#2850c0"/><stop offset="0.5" stop-color="#4a8ae0"/><stop offset="1" stop-color="#8ad0f8"/></linearGradient><linearGradient id="grn" x1="0" y1="0" x2="1" y2="1"><stop offset="0" stop-color="#2e7a3e"/><stop offset="0.5" stop-color="#177a1e"/><stop offset="1" stop-color="#7ac040"/></linearGradient><linearGradient id="red" x1="0" y1="0" x2="0" y2="1"><stop offset="0" stop-color="#b02a30"/><stop offset="0.5" stop-color="#c81418"/><stop offset="1" stop-color="#ff1010"/></linearGradient><linearGradient id="undo" x1="0" y1="0" x2="0" y2="1"><stop offset="0" stop-color="#a8e08a"/><stop offset="1" stop-color="#2f9a34"/></linearGradient><linearGradient id="lens" x1="0.1" y1="0.1" x2="0.9" y2="0.9"><stop offset="0" stop-color="#e8f0ff"/><stop offset="0.28" stop-color="#5a90dc"/><stop offset="0.5" stop-color="#1c58c4"/><stop offset="0.78" stop-color="#22b0e8"/><stop offset="1" stop-color="#d0fcff"/></linearGradient></defs><defs><linearGradient id="shd" x1="0" y1="0" x2="1" y2="0"><stop offset="0" stop-color="#8e8e98"/><stop offset="1" stop-color="#c1c1ce" stop-opacity="0"/></linearGradient></defs><path d="M234 70 L242 70.5 L249 76 L249 82 L234 82 Z" fill="url(#shd)"/><path d="M205.2 40.5 L235 42.5 L235.6 81.7 L206.2 80.5 Z" fill="url(#pg)" stroke="#c8c8cc" stroke-width="0.6"/><path d="M233.4 42.6 L235.2 42.7 L235.6 81.7 L233.8 81.6 Z" fill="#b8b8be"/><rect x="206" y="36" width="21" height="7" rx="1.5" transform="rotate(2.5 206 36)" fill="url(#blueh)" stroke="#2a48b8" stroke-width="0.6"/><path d="M207.5 45.5 L231.5 47.7" stroke="#9a9aa0" stroke-width="0.9" opacity="0.75"/><path d="M207.5 51.5 L231.5 53.7" stroke="#9a9aa0" stroke-width="0.9" opacity="0.75"/><path d="M207.5 57.8 L231.5 60.0" stroke="#9a9aa0" stroke-width="0.9" opacity="0.75"/><path d="M207.5 64 L231.5 66.2" stroke="#9a9aa0" stroke-width="0.9" opacity="0.75"/><path d="M207.5 69.5 L231.5 71.7" stroke="#9a9aa0" stroke-width="0.9" opacity="0.75"/><path d="M213.5 80.5 L239.8 55 L244.2 59.5 L217.8 84.5 Z" fill="url(#pencil)" stroke="#c89018" stroke-width="0.5"/><path d="M211 84 L213.5 80.5 L217.8 84.5 Z" fill="#f3d0a0"/><path d="M211 84 L212.2 82.3 L213.5 83.6 Z" fill="#222"/><path d="M239.8 55 L241.5 53.3 L245.8 57.8 L244.2 59.5 Z" fill="#222"/><path d="M241.5 53.3 L243.6 51.2 Q246.5 50.8 247.8 52.3 Q248.2 54.8 245.8 57.8 Z" fill="#e01818"/><defs><linearGradient id="prtop" x1="0" y1="1" x2="0.3" y2="0"><stop offset="0" stop-color="#3c3c3c"/><stop offset="1" stop-color="#9a9a9a"/></linearGradient><linearGradient id="prside" x1="0" y1="0" x2="1" y2="1"><stop offset="0" stop-color="#e8e8e8"/><stop offset="1" stop-color="#a8a8a8"/></linearGradient><linearGradient id="prfront" x1="0" y1="0" x2="0" y2="1"><stop offset="0" stop-color="#f0f0f0"/><stop offset="1" stop-color="#c0c0c0"/></linearGradient></defs><path d="M269 80 L300 83.5 L316 75 L312 73 L298.8 80 L270 76.5 Z" fill="#d0d0d8" opacity="0.7"/><path d="M298.2 39.9 L314.5 42.2 L309.5 56.8 L291.5 53.5 Z" fill="#f6f6f6" stroke="#b8b8b8" stroke-width="0.5"/><path d="M291.5 53.5 L298.2 39.9 L296.5 40.5 L290 53 Z" fill="#a0a0a0"/><path d="M269.5 63.6 L287.5 54 L312.9 58 L313.4 72 L298.8 81 L269.5 76.5 Z" fill="url(#prfront)" stroke="#b0b0b0" stroke-width="0.5"/><path d="M276.3 62.5 L288.6 55.1 L305.5 58 L296.5 65.8 Z" fill="url(#prtop)"/><path d="M273.4 64.7 L296.5 65.8 L293.7 67.5 L292 72 L273.4 69.5 Z" fill="#262626"/><path d="M293.7 67.5 L312.9 58.5 L313.4 72 L298.8 81 L293.7 75.4 Z" fill="url(#prside)" stroke="#a0a0a0" stroke-width="0.4"/><path d="M271.2 72 L290.9 72.6 L288.6 78.8 L270 74.3 Z" fill="#fafafa" stroke="#b8b8b8" stroke-width="0.4"/><circle cx="298.2" cy="65.3" r="0.9" fill="#3cc03c"/><path d="M329 77 Q335 72 345 73 Q360 73.5 372 80 L371 82 Q358 78.5 346 78.5 L346 82 L330 78.5 Z" fill="#d6d6de" opacity="0.8"/><defs><linearGradient id="undo2" x1="0" y1="0" x2="0.6" y2="1"><stop offset="0" stop-color="#b8ee9c"/><stop offset="0.45" stop-color="#62c04a"/><stop offset="1" stop-color="#2a9030"/></linearGradient></defs><path d="M333.7 42.2 L328.8 61.6 L348.3 66.8 L343.6 60.6 Q351 50.5 359 51 Q366 52 368 60.2 L372.2 57.6 Q371.5 46 358 43.2 Q346.5 41.3 338.2 49.3 Z" fill="url(#undo2)" stroke="#3a9a36" stroke-width="0.6" stroke-linejoin="round"/><path d="M339.5 50 Q347 43.5 358 44.6 Q369 46.5 371 56" fill="none" stroke="#d8f8c8" stroke-width="1" opacity="0.7"/><path d="M405 36.5 L431 36.5 L431 83 L395.8 83 L395.8 45.5 Z" fill="url(#pg)" stroke="#c4c4c8" stroke-width="0.7"/><path d="M395.8 45.5 L405 36.5 L405 45.5 Z" fill="#e6e6e6" stroke="#c4c4c8" stroke-width="0.6"/><rect x="421.3" y="61.8" width="20" height="20.6" fill="url(#grn)" stroke="#e8eee8" stroke-width="1"/><path d="M429.2 64.8 L434.6 64.8 L434.6 69.5 L439 69.5 L439 74.8 L434.6 74.8 L434.6 79.5 L429.2 79.5 L429.2 74.8 L424.5 74.8 L424.5 69.5 L429.2 69.5 Z" fill="#fafafa"/><path d="M462 36.5 L488 36.5 L488 83 L452.8 83 L452.8 45.5 Z" fill="url(#pg)" stroke="#c4c4c8" stroke-width="0.7"/><path d="M452.8 45.5 L462 36.5 L462 45.5 Z" fill="#e6e6e6" stroke="#c4c4c8" stroke-width="0.6"/><rect x="478.5" y="61.8" width="20" height="20.6" fill="url(#red)" stroke="#e8d8d8" stroke-width="1"/><path d="M482.2 68 L485 65.2 L488.5 68.7 L492 65.2 L494.8 68 L491.3 71.5 L494.8 75 L492 77.8 L488.5 74.3 L485 77.8 L482.2 75 L485.7 71.5 Z" fill="#ececec"/><defs><linearGradient id="c1" x1="0" y1="0" x2="0" y2="1"><stop offset="0" stop-color="#e4e4f8"/><stop offset="0.2" stop-color="#9aa0e6"/><stop offset="0.45" stop-color="#2c46cc"/><stop offset="0.52" stop-color="#0828c8"/><stop offset="0.8" stop-color="#1a8cf0"/><stop offset="1" stop-color="#70e0ff"/></linearGradient><radialGradient id="c1r" cx="0.5" cy="0.95" r="0.5"><stop offset="0" stop-color="#80f4ff" stop-opacity="0.9"/><stop offset="1" stop-color="#40c0ff" stop-opacity="0"/></radialGradient></defs><ellipse cx="532.6" cy="80.9" rx="18" ry="3" fill="#7cc8ec" opacity="0.7"/><circle cx="532.6" cy="60.4" r="20" fill="url(#c1)" stroke="#0a1a98" stroke-width="1.5"/><circle cx="532.6" cy="60.4" r="19" fill="url(#c1r)"/><path d="M521.8 53.8 L525.2 53.8 L525.2 69.4 L521.8 69.4 Z M529 61.6 L543.2 54.2 L543.2 69.2 Z" fill="#f2f2f2" stroke="#f2f2f2" stroke-width="1.2" stroke-linejoin="round"/><defs><linearGradient id="c2" x1="0" y1="0" x2="0" y2="1"><stop offset="0" stop-color="#e4e4f8"/><stop offset="0.2" stop-color="#9aa0e6"/><stop offset="0.45" stop-color="#2c46cc"/><stop offset="0.52" stop-color="#0828c8"/><stop offset="0.8" stop-color="#1a8cf0"/><stop offset="1" stop-color="#70e0ff"/></linearGradient><radialGradient id="c2r" cx="0.5" cy="0.95" r="0.5"><stop offset="0" stop-color="#80f4ff" stop-opacity="0.9"/><stop offset="1" stop-color="#40c0ff" stop-opacity="0"/></radialGradient></defs><ellipse cx="590.9" cy="80.8" rx="18" ry="3" fill="#7cc8ec" opacity="0.7"/><circle cx="590.9" cy="60.3" r="20" fill="url(#c2)" stroke="#0a1a98" stroke-width="1.5"/><circle cx="590.9" cy="60.3" r="19" fill="url(#c2r)"/><path d="M579.2 61.5 L598.6 52.2 L598.6 70.8 Z" fill="#f2f2f2" stroke="#f2f2f2" stroke-width="1.2" stroke-linejoin="round"/><defs><linearGradient id="c3" x1="0" y1="0" x2="0" y2="1"><stop offset="0" stop-color="#e4e4f8"/><stop offset="0.2" stop-color="#9aa0e6"/><stop offset="0.45" stop-color="#2c46cc"/><stop offset="0.52" stop-color="#0828c8"/><stop offset="0.8" stop-color="#1a8cf0"/><stop offset="1" stop-color="#70e0ff"/></linearGradient><radialGradient id="c3r" cx="0.5" cy="0.95" r="0.5"><stop offset="0" stop-color="#80f4ff" stop-opacity="0.9"/><stop offset="1" stop-color="#40c0ff" stop-opacity="0"/></radialGradient></defs><ellipse cx="646.4" cy="81.1" rx="18" ry="3" fill="#7cc8ec" opacity="0.7"/><circle cx="646.4" cy="60.6" r="20" fill="url(#c3)" stroke="#0a1a98" stroke-width="1.5"/><circle cx="646.4" cy="60.6" r="19" fill="url(#c3r)"/><path d="M638.1 52.2 L657.5 61.5 L638.1 70.1 Z" fill="#f2f2f2" stroke="#f2f2f2" stroke-width="1.2" stroke-linejoin="round"/><defs><linearGradient id="c4" x1="0" y1="0" x2="0" y2="1"><stop offset="0" stop-color="#e4e4f8"/><stop offset="0.2" stop-color="#9aa0e6"/><stop offset="0.45" stop-color="#2c46cc"/><stop offset="0.52" stop-color="#0828c8"/><stop offset="0.8" stop-color="#1a8cf0"/><stop offset="1" stop-color="#70e0ff"/></linearGradient><radialGradient id="c4r" cx="0.5" cy="0.95" r="0.5"><stop offset="0" stop-color="#80f4ff" stop-opacity="0.9"/><stop offset="1" stop-color="#40c0ff" stop-opacity="0"/></radialGradient></defs><ellipse cx="703.6" cy="81.1" rx="18" ry="3" fill="#7cc8ec" opacity="0.7"/><circle cx="703.6" cy="60.6" r="20" fill="url(#c4)" stroke="#0a1a98" stroke-width="1.5"/><circle cx="703.6" cy="60.6" r="19" fill="url(#c4r)"/><path d="M692.2 53.8 L706.8 61.5 L692.2 69.2 Z M710.6 53.6 L714.8 53.6 L714.8 69.4 L710.6 69.4 Z" fill="#f2f2f2" stroke="#f2f2f2" stroke-width="1.2" stroke-linejoin="round"/><path d="M750 36.5 L776.5 36.5 L776.5 82.3 L741 82.3 L741 45.8 Z" fill="url(#pg)" stroke="#c4c4c8" stroke-width="0.7"/><path d="M741 45.8 L750 36.5 L750 45.8 Z" fill="#e4e4e4" stroke="#c4c4c8" stroke-width="0.6"/><path d="M767.5 70 L779 80.3" stroke="#22448a" stroke-width="6" stroke-linecap="round"/><path d="M767.5 70 L779 80.3" stroke="#6a88c4" stroke-width="4" stroke-linecap="round"/><circle cx="760.5" cy="61.1" r="11" fill="#f4f4f4" stroke="#c8c8c8" stroke-width="0.7"/><circle cx="760.5" cy="61.1" r="9.2" fill="url(#lens)" stroke="#1c48a8" stroke-width="1"/><path d="M754.5 57.5 L759.5 52.5" stroke="#ffffff" stroke-width="1.6" opacity="0.55" stroke-linecap="round"/></svg>
</body></html>
